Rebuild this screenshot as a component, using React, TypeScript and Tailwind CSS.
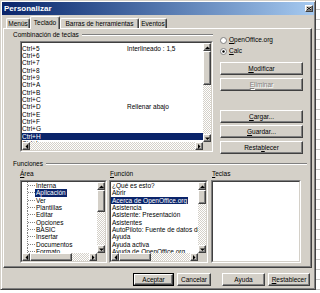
import React from "react";

const raised =
  "border border-t-white border-l-white border-r-[#404040] border-b-[#404040] shadow-[inset_-1px_-1px_0_#808080] bg-[#d4d0c8]";
const track =
  "bg-[repeating-conic-gradient(#ffffff_0%_25%,#d4d0c8_0%_50%)] bg-[length:2px_2px]";
const sunkenOuter =
  "border border-t-[#808080] border-l-[#808080] border-r-white border-b-white";
const sunkenInner =
  "border border-t-[#404040] border-l-[#404040] border-r-[#d4d0c8] border-b-[#d4d0c8] bg-white";

type Dir = "up" | "down" | "left" | "right";

function Arrow({ dir }: { dir: Dir }) {
  const v = dir === "up" || dir === "down";
  const pts =
    dir === "up"
      ? "0,3 5,3 2.5,0.5"
      : dir === "down"
      ? "0,0.5 5,0.5 2.5,3"
      : dir === "left"
      ? "3,0 3,5 0.5,2.5"
      : "0,0 0,5 2.5,2.5";
  return (
    <div className={`w-[8px] h-[8px] shrink-0 flex items-center justify-center ${raised}`}>
      <svg width={v ? 5 : 3} height={v ? 3 : 5} viewBox={v ? "0 0 5 3" : "0 0 3 5"}>
        <polygon points={pts} fill="#000" />
      </svg>
    </div>
  );
}

function VScroll({ thumb }: { thumb: string }) {
  return (
    <div className="w-[8px] h-full flex flex-col shrink-0">
      <Arrow dir="up" />
      <div className={`flex-1 flex flex-col ${track}`}>
        <div className={`${thumb} shrink-0 ${raised}`} />
      </div>
      <Arrow dir="down" />
    </div>
  );
}

function HScroll({ thumb }: { thumb?: string }) {
  return (
    <div className="flex-1 h-full flex">
      <Arrow dir="left" />
      <div className={`flex-1 flex ${track}`}>
        {thumb ? <div className={`${thumb} h-full shrink-0 ${raised}`} /> : null}
      </div>
      <Arrow dir="right" />
    </div>
  );
}

function Btn({
  children,
  className = "",
  disabled,
}: {
  children: React.ReactNode;
  className?: string;
  disabled?: boolean;
}) {
  return (
    <div
      className={`h-[13px] flex items-center justify-center whitespace-nowrap ${raised} ${
        disabled ? "text-[#808080] [text-shadow:1px_1px_0_#ffffff]" : ""
      } ${className}`}
    >
      {children}
    </div>
  );
}

function Radio({ sel }: { sel?: boolean }) {
  return (
    <svg width="7" height="7" viewBox="0 0 7 7" className="shrink-0">
      <circle cx="3.5" cy="3.5" r="3" fill="#ffffff" stroke="#808080" strokeWidth="1" />
      {sel ? <circle cx="3.5" cy="3.5" r="1.2" fill="#000" /> : null}
    </svg>
  );
}

function Tab({ children, w, sel }: { children: React.ReactNode; w: string; sel?: boolean }) {
  return (
    <div
      className={`${w} ${
        sel ? "h-[13px]" : "h-[10px] mb-[1px]"
      } shrink-0 flex items-center justify-center whitespace-nowrap border-t border-l border-r border-t-white border-l-white border-r-[#404040] rounded-t-[2px] bg-[#d4d0c8] shadow-[inset_-1px_0_0_#808080]`}
    >
      {children}
    </div>
  );
}

const keys = [
  "Ctrl+5",
  "Ctrl+6",
  "Ctrl+7",
  "Ctrl+8",
  "Ctrl+9",
  "Ctrl+A",
  "Ctrl+B",
  "Ctrl+C",
  "Ctrl+D",
  "Ctrl+E",
  "Ctrl+F",
  "Ctrl+G",
  "Ctrl+H",
  "Ctrl+I",
];
const keyFn: Record<string, string> = {
  "Ctrl+5": "Interlineado : 1,5",
  "Ctrl+D": "Rellenar abajo",
};

const areas = [
  "Interna",
  "Aplicación",
  "Ver",
  "Plantillas",
  "Editar",
  "Opciones",
  "BASIC",
  "Insertar",
  "Documentos",
  "Formato",
];

const funcs = [
  "¿Qué es esto?",
  "Abrir",
  "Acerca de OpenOffice.org",
  "Asistencia",
  "Asistente: Presentación",
  "Asistentes",
  "AutoPiloto: Fuente de datos de la aplicación",
  "Ayuda",
  "Ayuda activa",
  "Ayuda de OpenOffice.org",
];

function TreeLine() {
  return (
    <svg width="13" height="7.35" viewBox="0 0 13 7.35" className="shrink-0">
      <line x1="5.5" y1="0" x2="5.5" y2="7.35" stroke="#808080" strokeWidth="1" strokeDasharray="1 1" />
      <line x1="6" y1="3.5" x2="13" y2="3.5" stroke="#808080" strokeWidth="1" strokeDasharray="1 1" />
    </svg>
  );
}

export default function App() {
  return (
    <div className="w-[320px] h-[293px] overflow-hidden bg-white bg-[repeating-linear-gradient(to_bottom,#ffffff_0px,#ffffff_9px,#c8c8c8_9px,#c8c8c8_10px)] font-['Liberation_Sans',Arial,sans-serif] text-[6.5px] leading-[8px] text-black">
      <div className="w-[316px] h-[290px] flex flex-col bg-[#d4d0c8] border border-t-[#d4d0c8] border-l-[#d4d0c8] border-r-[#404040] border-b-[#404040] p-[1px] shadow-[inset_1px_1px_0_#ffffff,inset_-1px_-1px_0_#808080]">
        {/* title bar */}
        <div className="h-[13px] shrink-0 flex items-center justify-between pl-[2px] pr-[1px] bg-linear-to-r from-[#0a246a] to-[#a6caf0]">
          <span className="text-white font-bold text-[8px] leading-[10px]">Personalizar</span>
          <div className={`w-[8px] h-[7px] flex items-center justify-center ${raised}`}>
            <svg width="4" height="3" viewBox="0 0 4 3">
              <path d="M0 0L4 3M4 0L0 3" stroke="#000" strokeWidth="1" />
            </svg>
          </div>
        </div>

        <div className="flex-1 flex flex-col pl-[1px] pr-[2px]">
          {/* tabs */}
          <div className="h-[13px] mt-[1px] -mb-[1px] flex items-end pl-[3px] relative z-10">
            <Tab w="w-[24px]">Menús</Tab>
            <Tab w="w-[30px]" sel>
              Teclado
            </Tab>
            <Tab w="w-[79px]">Barras de herramientas</Tab>
            <Tab w="w-[28px]">Eventos</Tab>
          </div>

          {/* panel */}
          <div className="h-[240px] shrink-0 flex flex-col border border-t-white border-l-white border-r-[#404040] border-b-[#404040] shadow-[inset_-1px_-1px_0_#808080]">
            <div className="flex items-start">
              <div className="w-[209px] shrink-0 pl-[9px] flex flex-col">
                <div className="mt-[2px] h-[8px] flex items-center">
                  <span className="whitespace-nowrap">Combinación de teclas</span>
                  <div className="flex-1 ml-[3px] h-[2px] border-t border-t-[#808080] border-b border-b-white" />
                </div>
                <div className={`ml-[7px] mt-[2px] w-[193px] h-[111px] ${sunkenOuter}`}>
                  <div className={`w-full h-full flex flex-col ${sunkenInner}`}>
                    <div className="flex-1 flex min-h-0">
                      <div className="flex-1 overflow-hidden pt-[1.5px]">
                        {keys.map((k, i) => (
                          <div
                            key={k}
                            className={`h-[7.35px] leading-[7.35px] flex whitespace-nowrap ${
                              i === 12 ? "bg-[#0a246a] text-white" : ""
                            }`}
                          >
                            <span className="w-[105px] shrink-0">{k}</span>
                            <span>{keyFn[k] ?? ""}</span>
                          </div>
                        ))}
                      </div>
                      <VScroll thumb="h-[34px]" />
                    </div>
                    <div className="h-[8px] flex shrink-0">
                      <HScroll />
                      <div className="w-[8px] h-full bg-[#d4d0c8]" />
                    </div>
                  </div>
                </div>
              </div>

              <div className="ml-[7px] w-[83px] shrink-0 flex flex-col">
                <div className="mt-[7px] h-[8px] flex items-center">
                  <Radio />
                  <span className="ml-[2px] whitespace-nowrap">
                    <span className="underline">O</span>penOffice.org
                  </span>
                </div>
                <div className="mt-[3px] h-[8px] flex items-center">
                  <Radio sel />
                  <span className="ml-[2px]">
                    <span className="underline">C</span>alc
                  </span>
                </div>
                <Btn className="mt-[7px]">
                  <span className="underline">M</span>odificar
                </Btn>
                <Btn className="mt-[3px]" disabled>
                  <span className="underline">E</span>liminar
                </Btn>
                <Btn className="mt-[19px]">
                  <span className="underline">C</span>argar...
                </Btn>
                <Btn className="mt-[2px]">
                  <span className="underline">G</span>uardar...
                </Btn>
                <Btn className="mt-[3px]">
                  Resta<span className="underline">b</span>lecer
                </Btn>
              </div>
            </div>

            {/* Funciones */}
            <div className="mt-[6px] h-[8px] pl-[9px] pr-[4px] flex items-center">
              <span>Funciones</span>
              <div className="flex-1 ml-[3px] h-[2px] border-t border-t-[#808080] border-b border-b-white" />
            </div>
            <div className="mt-[2px] h-[8px] pl-[16px] flex">
              <span className="w-[89px] shrink-0">
                <span className="underline">Á</span>rea
              </span>
              <span className="w-[102px] shrink-0 pl-[1px]">
                <span className="underline">F</span>unción
              </span>
              <span className="pl-[1px]">
                <span className="underline">T</span>eclas
              </span>
            </div>
            <div className="mt-[2px] h-[83px] pl-[16px] flex">
              {/* Área */}
              <div className={`w-[87px] h-full shrink-0 ${sunkenOuter}`}>
                <div className={`w-full h-full flex flex-col ${sunkenInner}`}>
                  <div className="flex-1 flex min-h-0">
                    <div className="flex-1 overflow-hidden">
                      {areas.map((a, i) => (
                        <div key={a} className="h-[7.35px] leading-[7.35px] flex items-center whitespace-nowrap">
                          <TreeLine />
                          <span className={`px-[1px] ${i === 1 ? "bg-[#0a246a] text-white" : ""}`}>{a}</span>
                        </div>
                      ))}
                    </div>
                    <VScroll thumb="h-[22px]" />
                  </div>
                  <div className="h-[8px] flex shrink-0">
                    <HScroll thumb="w-[42px]" />
                    <div className="w-[8px] h-full bg-[#d4d0c8]" />
                  </div>
                </div>
              </div>

              {/* Función */}
              <div className={`ml-[2px] w-[99px] h-full shrink-0 ${sunkenOuter}`}>
                <div className={`w-full h-full flex flex-col ${sunkenInner}`}>
                  <div className="flex-1 flex min-h-0">
                    <div className="flex-1 overflow-hidden">
                      {funcs.map((f, i) => (
                        <div key={f} className="h-[7.35px] leading-[7.35px] flex whitespace-nowrap">
                          <span className={`px-[1px] ${i === 2 ? "bg-[#0a246a] text-white" : ""}`}>{f}</span>
                        </div>
                      ))}
                    </div>
                    <VScroll thumb="h-[14px]" />
                  </div>
                  <div className="h-[8px] flex shrink-0">
                    <HScroll thumb="w-[32px]" />
                    <div className="w-[8px] h-full bg-[#d4d0c8]" />
                  </div>
                </div>
              </div>

              {/* Teclas */}
              <div className={`ml-[3px] w-[90px] h-full shrink-0 ${sunkenOuter}`}>
                <div className={`w-full h-full ${sunkenInner}`} />
              </div>
            </div>
          </div>

          {/* bottom buttons */}
          <div className="mt-[5px] h-[13px] flex justify-end pr-[2px]">
            <div className="w-[41px] h-[13px] border border-black flex">
              <Btn className="flex-1 h-full">Aceptar</Btn>
            </div>
            <Btn className="ml-[3px] w-[34px]">Cancelar</Btn>
            <Btn className="ml-[11px] w-[43px]">Ayuda</Btn>
            <Btn className="ml-[3px] w-[42px]">
              <span className="underline">R</span>establecer
            </Btn>
          </div>
        </div>
      </div>
    </div>
  );
}
